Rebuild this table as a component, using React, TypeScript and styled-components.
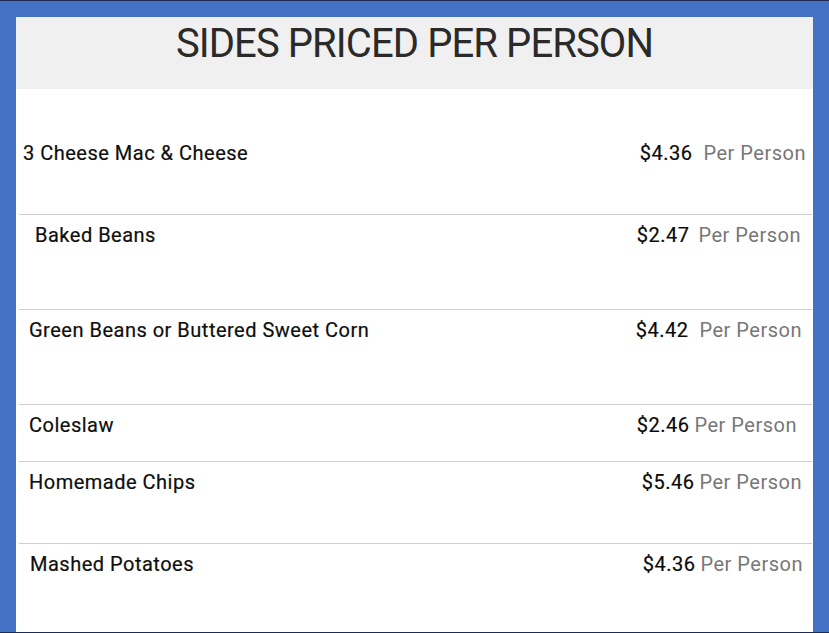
import React from "react";
import styled, { createGlobalStyle } from "styled-components";

const GlobalStyle = createGlobalStyle`
  html, body { margin: 0; padding: 0; background: #4472c4; }
  body { font-family: Roboto, "Liberation Sans", Arial, sans-serif; }
`;

const Frame = styled.div`
  box-sizing: border-box;
  height: 633px;
  width: 829px;
  overflow: hidden;
  background: #4472c4;
  border-top: 1px solid #1d2b52;
  border-bottom: 1px solid #1d2b52;
  padding: 16px 16px 0 16px;
`;

const Panel = styled.div`
  background: #ffffff;
  height: 100%;
  display: flex;
  flex-direction: column;
`;

const Header = styled.header`
  box-sizing: border-box;
  height: 72px;
  flex: none;
  background: #f0f0f0;
  padding-top: 3px;
  display: flex;
  justify-content: center;
`;

const Title = styled.h1`
  margin: 0;
  font-family: Roboto, "Liberation Sans", sans-serif;
  font-weight: 400;
  font-size: 40px;
  line-height: 47px;
  color: #2a2a2a;
  letter-spacing: -0.9px;
`;

const List = styled.div`
  padding: 44px 1px 0 3px;
  display: flex;
  flex-direction: column;
`;

const Row = styled.div<{ $h: number; $last?: boolean; $indent: number; $right: number }>`
  box-sizing: border-box;
  height: ${(p) => p.$h}px;
  flex: none;
  padding: 8px ${(p) => p.$right}px 0 ${(p) => p.$indent}px;
  border-bottom: ${(p) => (p.$last ? "none" : "1px solid #cfcfcf")};
  display: flex;
  justify-content: space-between;
  align-items: flex-start;
  font-size: 20px;
  line-height: 24px;
  letter-spacing: 0.5px;
`;

const Name = styled.span`
  color: #0e0e0e;
  -webkit-text-stroke: 0.2px #0e0e0e;
`;

const PriceGroup = styled.span<{ $gap: number }>`
  display: flex;
  gap: ${(p) => p.$gap}px;
`;

const Price = styled.span`
  color: #0a0a0a;
  -webkit-text-stroke: 0.2px #0a0a0a;
`;

const Unit = styled.span`
  color: #777777;
`;

type Item = { name: string; price: string; h: number; indent: number; right: number; gap: number };

const items: Item[] = [
  { name: "3 Cheese Mac & Cheese", price: "$4.36", h: 82, indent: 4, right: 6, gap: 11 },
  { name: "Baked Beans", price: "$2.47", h: 95, indent: 16, right: 11, gap: 9 },
  { name: "Green Beans or Buttered Sweet Corn", price: "$4.42", h: 95, indent: 10, right: 10, gap: 11 },
  { name: "Coleslaw", price: "$2.46", h: 57, indent: 10, right: 15, gap: 5 },
  { name: "Homemade Chips", price: "$5.46", h: 82, indent: 10, right: 10, gap: 5 },
  { name: "Mashed Potatoes", price: "$4.36", h: 90, indent: 11, right: 9, gap: 5 },
];

export default function App() {
  return (
    <>
      <GlobalStyle />
      <Frame>
        <Panel>
          <Header>
            <Title>SIDES PRICED PER PERSON</Title>
          </Header>
          <List>
            {items.map((it, i) => (
              <Row
                key={it.name}
                $h={it.h}
                $indent={it.indent}
                $right={it.right}
                $last={i === items.length - 1}
              >
                <Name>{it.name}</Name>
                <PriceGroup $gap={it.gap}>
                  <Price>{it.price}</Price>
                  <Unit>Per Person</Unit>
                </PriceGroup>
              </Row>
            ))}
          </List>
        </Panel>
      </Frame>
    </>
  );
}
